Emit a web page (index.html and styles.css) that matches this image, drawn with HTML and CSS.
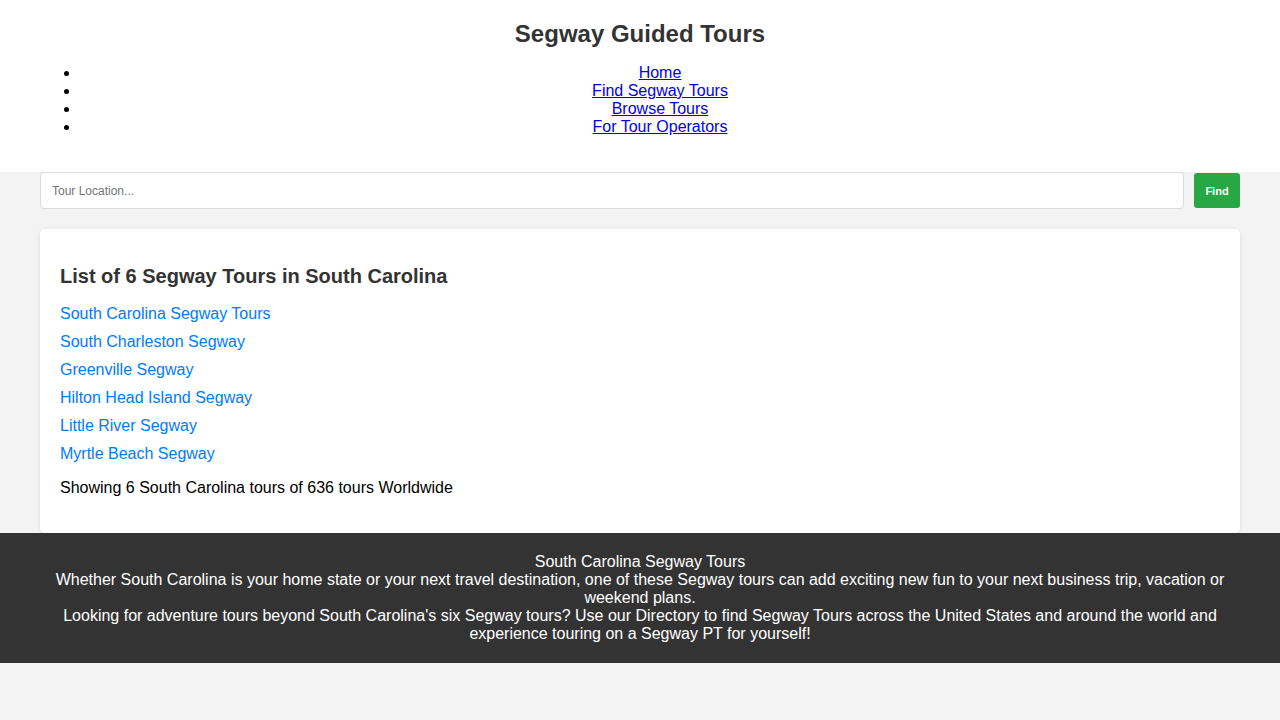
FILE: index.html
```html
<!DOCTYPE html>
<html lang="en">
<head>
<meta charset="utf-8">
<title>Segway Guided Tours</title>
<link rel="stylesheet" href="styles.css">
</head>
<body>
<header class="site-header">
  <h1 class="site-title">Segway Guided Tours</h1>
  <ul class="nav">
    <li><a href="#">Home</a></li>
    <li><a href="#">Find Segway Tours</a></li>
    <li><a href="#">Browse Tours</a></li>
    <li><a href="#">For Tour Operators</a></li>
  </ul>
</header>
<main class="container">
  <form class="search">
    <input class="search-input" type="text" placeholder="Tour Location...">
    <button class="search-btn" type="button">Find</button>
  </form>
  <section class="card">
    <h3 class="card-title">List of 6 Segway Tours in South Carolina</h3>
    <ul class="tour-list">
      <li><a href="#">South Carolina Segway Tours</a></li>
      <li><a href="#">South Charleston Segway</a></li>
      <li><a href="#">Greenville Segway</a></li>
      <li><a href="#">Hilton Head Island Segway</a></li>
      <li><a href="#">Little River Segway</a></li>
      <li><a href="#">Myrtle Beach Segway</a></li>
    </ul>
    <p class="summary">Showing 6 South Carolina tours of 636 tours Worldwide</p>
  </section>
</main>
<footer class="site-footer">
  <div>South Carolina Segway Tours</div>
  <div>Whether South Carolina is your home state or your next travel destination, one of these Segway tours can add exciting new fun to your next business trip, vacation or weekend plans.</div>
  <div>Looking for adventure tours beyond South Carolina's six Segway tours? Use our Directory to find Segway Tours across the United States and around the world and experience touring on a Segway PT for yourself!</div>
</footer>
</body>
</html>
```
FILE: styles.css
```css
html, body {
  margin: 0;
  padding: 0;
}
body {
  background: #f3f3f3;
  font-family: "Liberation Sans", Arial, sans-serif;
  font-size: 16px;
  line-height: 18px;
  color: #000;
}
.site-header {
  background: #fff;
  padding: 20px 40px;
  text-align: center;
}
.site-title {
  margin: 0;
  font-size: 24px;
  line-height: 28px;
  color: #333;
  font-weight: bold;
}
.nav {
  margin: 16px 0;
  padding-left: 40px;
}
.nav li {
  text-align: center;
}
.nav a {
  color: #0000ee;
  text-decoration: underline;
}
.container {
  padding: 0 40px;
}
.search {
  display: flex;
  gap: 10px;
  align-items: center;
  margin: 0 0 20px;
}
.search-input {
  flex: 1;
  height: 37px;
  box-sizing: border-box;
  border: 1px solid #dcdcdc;
  border-radius: 4px;
  padding: 0 11px;
  font-family: "Liberation Sans", Arial, sans-serif;
  font-size: 12px;
  background: #fff;
  outline: none;
}
.search-input::placeholder {
  color: #757575;
}
.search-btn {
  width: 46px;
  height: 35px;
  border: none;
  border-radius: 3px;
  background: #28a745;
  color: #fff;
  font-family: "Liberation Sans", Arial, sans-serif;
  font-size: 11px;
  font-weight: bold;
  padding: 0;
}
.card {
  background: #fff;
  border-radius: 5px;
  box-shadow: 0 1px 4px rgba(0, 0, 0, 0.1);
  padding: 20px;
}
.card-title {
  margin: 16px 0 12px;
  font-size: 20px;
  line-height: 23px;
  color: #333;
}
.tour-list {
  list-style: none;
  margin: 0;
  padding: 0;
}
.tour-list li {
  padding: 5px 0;
}
.tour-list a {
  color: #007bff;
  text-decoration: none;
}
.summary {
  margin: 11px 0 16px;
}
.site-footer {
  background: #333;
  color: #fff;
  text-align: center;
  padding: 20px 40px;
}
```
